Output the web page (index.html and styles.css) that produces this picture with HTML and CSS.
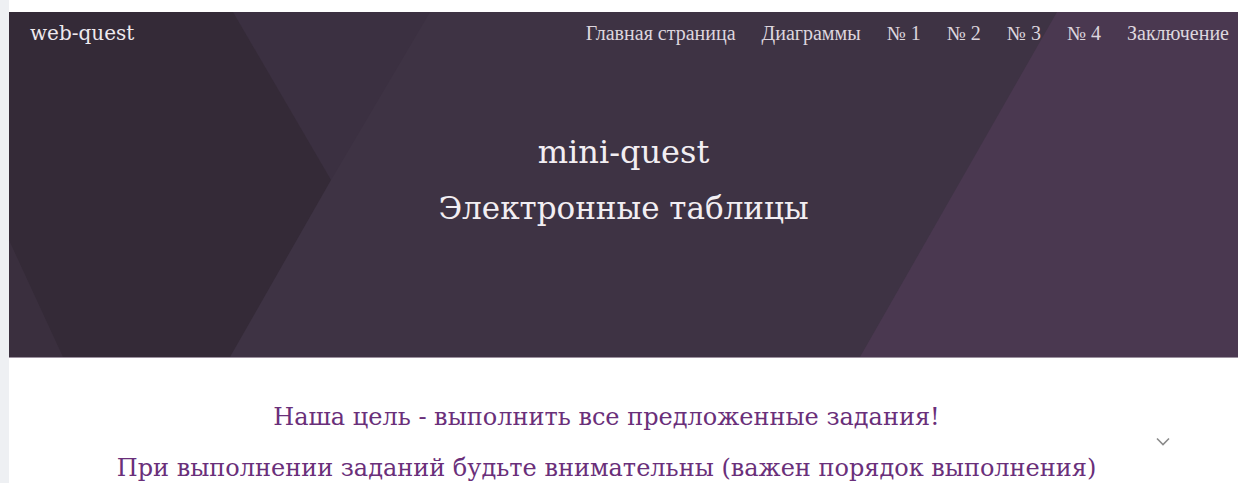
FILE: index.html
```html
<!DOCTYPE html>
<html lang="ru">
<head>
<meta charset="utf-8">
<title>web-quest</title>
<link rel="stylesheet" href="styles.css">
</head>
<body>
<div class="page">
  <header class="hero">
    <svg class="hero-bg" viewBox="0 0 1229 345" preserveAspectRatio="none" aria-hidden="true">
      <rect width="1229" height="345" fill="#3e3344"/>
      <polygon points="224,0 421,0 322,168" fill="#3b3041"/>
      <polygon points="1048,0 1229,0 1229,345 851,345" fill="#4a3850"/>
      <polygon points="0,0 224,0 322,168 221,345 0,345" fill="#342a37"/>
      <polygon points="0,228 54,345 0,345" fill="#3a2f3e"/>
    </svg>
    <nav class="topbar">
      <a class="brand" href="#">web-quest</a>
      <ul class="menu">
        <li><a href="#">Главная страница</a></li>
        <li><a href="#">Диаграммы</a></li>
        <li><a href="#">№ 1</a></li>
        <li><a href="#">№ 2</a></li>
        <li><a href="#">№ 3</a></li>
        <li><a href="#">№ 4</a></li>
        <li><a href="#">Заключение</a></li>
      </ul>
    </nav>
    <div class="hero-titles">
      <h1 class="title">mini-quest</h1>
      <h2 class="subtitle">Электронные таблицы</h2>
    </div>
  </header>
  <main class="intro">
    <div class="intro-text">
      <p>Наша цель - выполнить все предложенные задания!</p>
      <p>При выполнении заданий будьте внимательны (важен порядок выполнения)</p>
    </div>
    <svg class="chevron" width="14" height="9" viewBox="0 0 14 9" aria-hidden="true">
      <path d="M1 1.5 L7 7.5 L13 1.5" fill="none" stroke="#8a8a8a" stroke-width="1.6"/>
    </svg>
  </main>
</div>
</body>
</html>
```

FILE: styles.css
```css
html, body {
  margin: 0;
  padding: 0;
  background: #ffffff;
}

.page {
  padding-top: 12px;
  border-left: 9px solid #eef0f3;
  height: 471px;
  overflow: hidden;
}

.hero {
  position: relative;
  height: 345px;
  border-bottom: 1px solid #9c919f;
  overflow: hidden;
}

.hero-bg {
  position: absolute;
  inset: 0;
  width: 100%;
  height: 100%;
  display: block;
}

.topbar {
  position: relative;
  display: flex;
  justify-content: space-between;
  align-items: center;
  padding: 8px 9px 0 21px;
  height: 26px;
}

.brand {
  font-family: "DejaVu Serif", serif;
  font-size: 20px;
  color: #eee9ee;
  text-decoration: none;
}

.menu {
  list-style: none;
  margin: 0;
  padding: 0;
  display: flex;
  gap: 26px;
}

.menu a {
  font-family: "Liberation Serif", serif;
  font-size: 20px;
  color: #ddd6de;
  text-decoration: none;
}

.hero-titles {
  position: relative;
  display: flex;
  flex-direction: column;
  align-items: center;
  padding-top: 87px;
}

.title,
.subtitle {
  margin: 0;
  font-family: "DejaVu Serif", serif;
  font-weight: normal;
  color: #f2eef2;
  line-height: 38px;
}

.title {
  font-size: 32px;
}

.subtitle {
  font-size: 31px;
  margin-top: 18px;
}

.intro {
  position: relative;
  padding-top: 44px;
}

.intro-text {
  text-align: center;
  padding-right: 34px;
}

.intro-text p {
  margin: 0 0 21px;
  font-family: "DejaVu Serif", serif;
  font-size: 24px;
  line-height: 30px;
  color: #6a2f7a;
  white-space: nowrap;
}

/* scroll hint beside the intro lines */
.chevron {
  position: absolute;
  left: 1147px;
  top: 79px;
}
```
